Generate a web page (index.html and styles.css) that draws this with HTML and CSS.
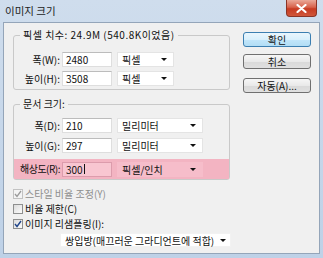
FILE: index.html
```html
<!DOCTYPE html>
<html>
<head>
  <meta charset="UTF-8">
  <link rel="stylesheet" href="styles.css">
  <title>이미지 크기</title>
</head>
<body>
<div class="window">
  <div class="titlebar">
    <span class="title">이미지 크기</span>
    <span class="close">
      <svg width="11" height="9" viewBox="0 0 11 9"><path d="M1.5 1 L9.5 8 M9.5 1 L1.5 8" stroke="#fff" stroke-width="2.2" stroke-linecap="round"/></svg>
    </span>
  </div>
  <div class="client">
    <div class="main">
      <fieldset class="group g1">
        <legend class="wide">픽셀 치수: 24.9M (540.8K이었음)</legend>
        <div class="row">
          <span class="label">폭(W):</span>
          <span class="input">2480</span>
          <span class="select w-px">픽셀<i class="arrow"></i></span>
        </div>
        <div class="row">
          <span class="label">높이(H):</span>
          <span class="input">3508</span>
          <span class="select w-px">픽셀<i class="arrow"></i></span>
        </div>
      </fieldset>

      <fieldset class="group g2">
        <legend>문서 크기:</legend>
        <div class="row">
          <span class="label">폭(D):</span>
          <span class="input">210</span>
          <span class="select w-mm">밀리미터<i class="arrow"></i></span>
        </div>
        <div class="row">
          <span class="label">높이(G):</span>
          <span class="input">297</span>
          <span class="select w-mm">밀리미터<i class="arrow"></i></span>
        </div>
        <div class="row hl">
          <span class="label tight">해상도(R):</span>
          <span class="input">300<span class="caret"></span></span>
          <span class="select w-mm">픽셀/인치<i class="arrow"></i></span>
        </div>
      </fieldset>

      <div class="checks">
        <div class="check disabled">
          <span class="box"><svg width="8" height="8" viewBox="0 0 8 8"><path d="M1 4 L3 6.5 L7 1" fill="none" stroke="#9a9a9a" stroke-width="1.3"/></svg></span>스타일 비율 조정(Y)
        </div>
        <div class="check">
          <span class="box"></span>비율 제한(C)
        </div>
        <div class="check">
          <span class="box"><svg width="8" height="8" viewBox="0 0 8 8"><path d="M1 4 L3 6.5 L7 1" fill="none" stroke="#21468a" stroke-width="1.4"/></svg></span>이미지 리샘플링(I):
        </div>
      </div>

      <span class="select resample">쌍입방(매끄러운 그라디언트에 적합)<i class="arrow"></i></span>
    </div>

    <div class="side">
      <span class="btn default">확인</span>
      <span class="btn cancel">취소</span>
      <span class="btn auto">자동(A)...</span>
    </div>
  </div>
</div>
</body>
</html>
```

FILE: styles.css
```css
* {
  box-sizing: border-box;
}

body {
  margin: 0;
  font-family: "Noto Sans CJK KR", "Noto Sans", sans-serif;
  font-size: 10px;
  color: #111;
}

.window {
  width: 323px;
  height: 258px;
  background: linear-gradient(#cfdded, #bed1e7);
  display: flex;
  flex-direction: column;
}

.titlebar {
  height: 22px;
  display: flex;
  align-items: flex-start;
}

.title {
  padding: 4px 0 0 5px;
  font-size: 10.5px;
  line-height: 13px;
  color: #222;
}

.close {
  margin-left: auto;
  margin-right: 6px;
  width: 31px;
  height: 17px;
  border: 1px solid #8b3426;
  border-top: none;
  border-radius: 0 0 4px 4px;
  background: linear-gradient(#eaa898, #d8634c 45%, #c73b22 55%, #d0563a);
  display: flex;
  align-items: center;
  justify-content: center;
}

.client {
  flex: 1;
  margin: 0 3px 4px 3px;
  border: 1px solid #94a5b9;
  background: #f0f0f0;
  display: flex;
}

.main {
  width: 226px;
  padding: 6px 0 0 9px;
  display: flex;
  flex-direction: column;
  align-items: flex-start;
}

.group {
  margin: 0;
  width: 217px;
  min-width: 0;
  border: 1px solid #c9c9c9;
  border-radius: 3px;
}

.group legend {
  margin-left: 6px;
  padding: 0 3px;
  line-height: 12px;
  height: 12px;
}

.group legend.wide {
  letter-spacing: 0.5px;
}

.g1 {
  padding: 11px 0 3px 0;
}

.g2 {
  margin-top: 8px;
  padding: 8px 0 0 0;
}

.row {
  display: flex;
  align-items: center;
  height: 15px;
}

.g1 .row + .row {
  margin-top: 4px;
}

.g2 .row + .row {
  margin-top: 5px;
}

.g2 .row.hl {
  margin-top: 6px;
  height: 20px;
  background: #f3b4c2;
}

.label {
  width: 46px;
  margin-right: 2px;
  text-align: right;
  line-height: 12px;
  white-space: nowrap;
}

.label.tight {
  letter-spacing: -0.5px;
}

.input {
  width: 50px;
  height: 15px;
  padding-left: 3px;
  background: #fff;
  border: 1px solid #dedede;
  border-top-color: #bcbcbc;
  line-height: 13px;
  display: flex;
  align-items: center;
}

.select {
  margin-left: 5px;
  height: 15px;
  padding: 0 6px 0 4px;
  background: #fff;
  border: 1px solid #e4e4e4;
  line-height: 13px;
  display: flex;
  align-items: center;
  justify-content: space-between;
  white-space: nowrap;
}

.w-px {
  width: 57px;
}

.w-mm {
  width: 86px;
}

.hl .input {
  background: #f8c6d1;
  border-color: #dc9cac;
}

.hl .select {
  background: #f6bdca;
  border-color: #f6bdca;
}

.caret {
  width: 1px;
  height: 10px;
  margin-left: 1px;
  background: #111;
}

.arrow {
  width: 0;
  height: 0;
  border-left: 3px solid transparent;
  border-right: 3px solid transparent;
  border-top: 3px solid #111;
}

.checks {
  margin-top: 6px;
  display: flex;
  flex-direction: column;
}

.check {
  height: 15px;
  line-height: 15px;
  display: flex;
  align-items: center;
}

.check.disabled {
  color: #8e8e8e;
}

.box {
  width: 10px;
  height: 10px;
  margin-right: 2px;
  border: 1px solid #8e8f8f;
  background: linear-gradient(135deg, #dcdcdc, #fbfbfb);
  display: flex;
  align-items: center;
  justify-content: center;
}

.disabled .box {
  border-color: #c2c2c2;
  background: #f4f4f4;
}

.resample {
  margin: 2px 0 0 47px;
  width: 171px;
  height: 14px;
  padding-right: 4px;
  border-color: #f2f2f2;
}

.side {
  margin-left: 13px;
  padding-top: 9px;
  display: flex;
  flex-direction: column;
}

.btn {
  width: 68px;
  height: 15px;
  border: 1px solid #707070;
  border-radius: 3px;
  background: linear-gradient(#f6f6f6, #e9e9e9 50%, #d9d9d9 51%, #e0e0e0);
  text-align: center;
  line-height: 13px;
}

.btn.default {
  border-color: #3c7fb1;
  background: linear-gradient(#eaf6fd, #d9f0fc 50%, #c2e6fa 51%, #b2ddf5);
}

.btn.cancel {
  margin-top: 7px;
}

.btn.auto {
  margin-top: 9px;
}
```
